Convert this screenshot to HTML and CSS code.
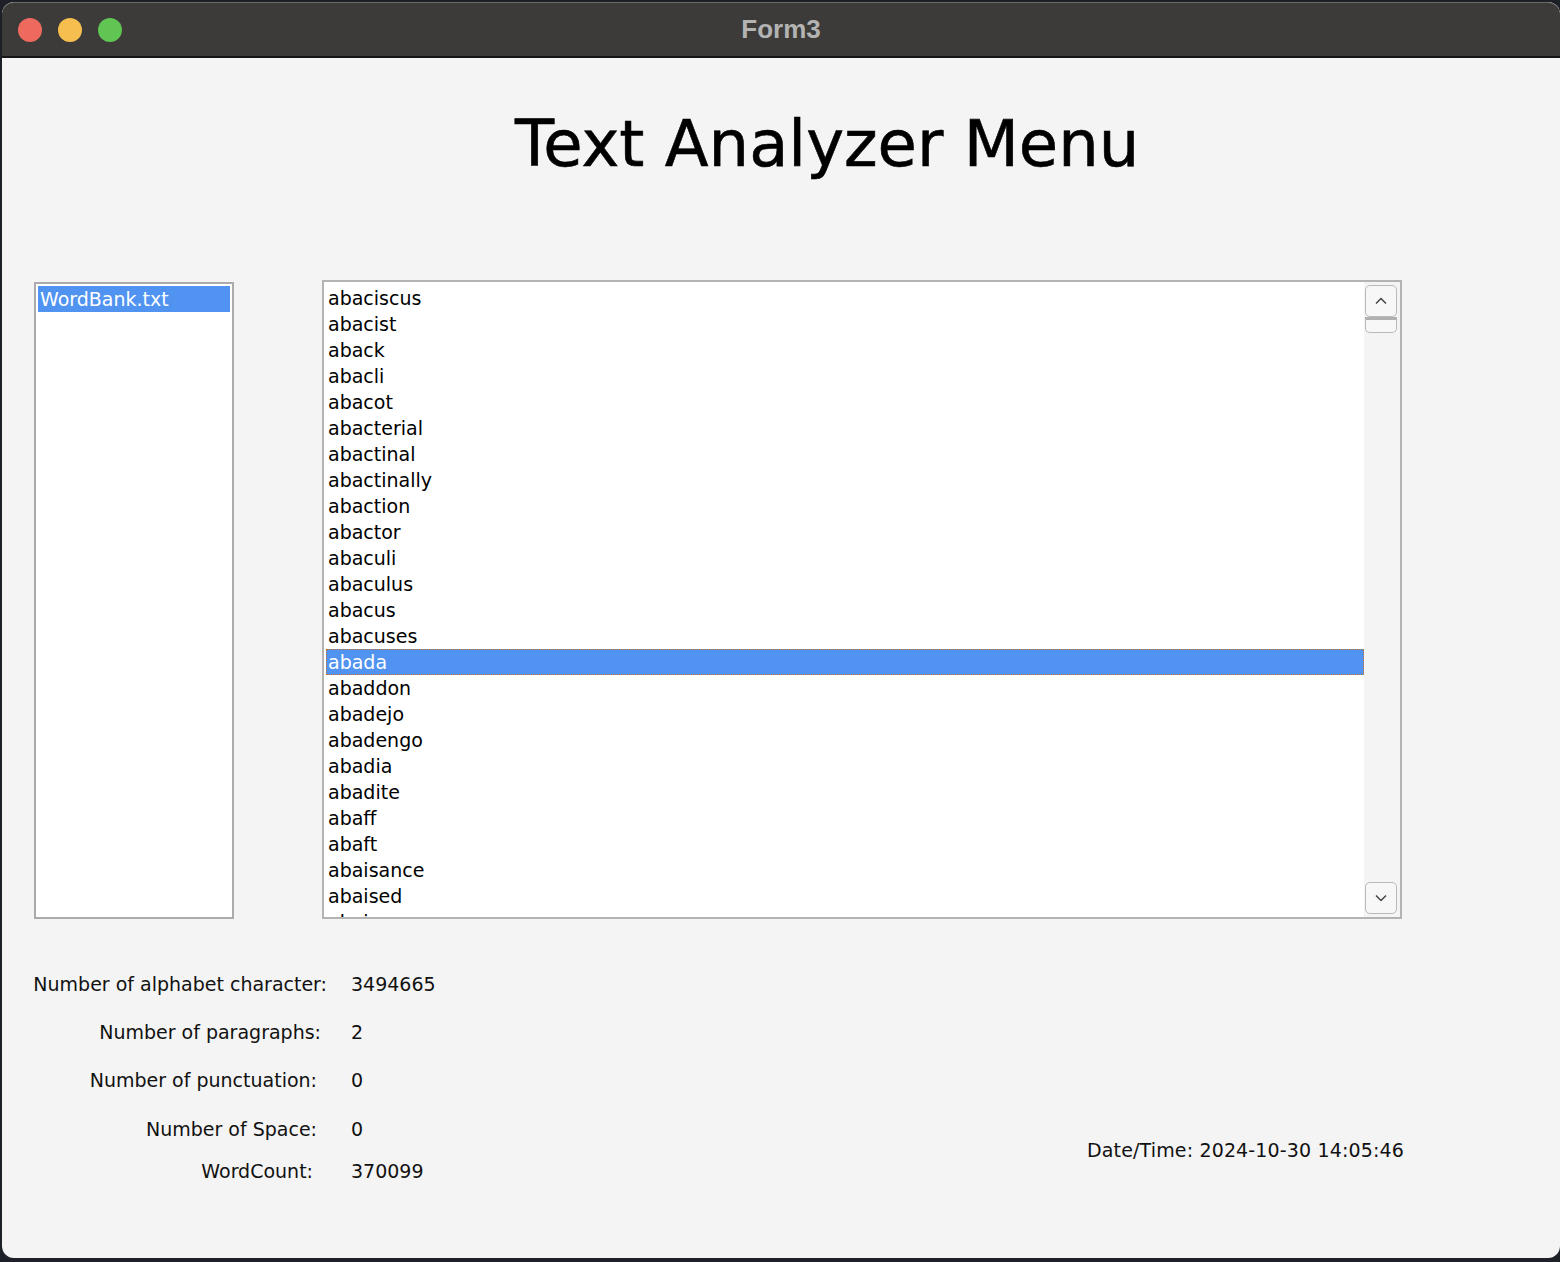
FILE: index.html
```html
<!DOCTYPE html>
<html>
<head>
<meta charset="utf-8">
<title>Form3</title>
<link rel="stylesheet" href="styles.css">
</head>
<body>
<div class="window">
  <div class="titlebar">
    <div class="lights">
      <span class="light red"></span>
      <span class="light yellow"></span>
      <span class="light green"></span>
    </div>
    <div class="wintitle">Form3</div>
  </div>
  <div class="content">
    <div class="header">
      <h1 class="title">Text Analyzer Menu</h1>
    </div>
    <div class="lists">
      <div class="filelist">
        <div class="item selected">WordBank.txt</div>
      </div>
      <div class="wordlist">
        <div class="words">
          <div class="item">abaciscus</div>
          <div class="item">abacist</div>
          <div class="item">aback</div>
          <div class="item">abacli</div>
          <div class="item">abacot</div>
          <div class="item">abacterial</div>
          <div class="item">abactinal</div>
          <div class="item">abactinally</div>
          <div class="item">abaction</div>
          <div class="item">abactor</div>
          <div class="item">abaculi</div>
          <div class="item">abaculus</div>
          <div class="item">abacus</div>
          <div class="item">abacuses</div>
          <div class="item selected focused">abada</div>
          <div class="item">abaddon</div>
          <div class="item">abadejo</div>
          <div class="item">abadengo</div>
          <div class="item">abadia</div>
          <div class="item">abadite</div>
          <div class="item">abaff</div>
          <div class="item">abaft</div>
          <div class="item">abaisance</div>
          <div class="item">abaised</div>
          <div class="item">abaiser</div>
        </div>
        <div class="scrollbar">
          <div class="sbtn">
            <svg width="14" height="8" viewBox="0 0 14 8"><path d="M2 6.5 L7 1.5 L12 6.5" fill="none" stroke="#444" stroke-width="1.5"/></svg>
          </div>
          <div class="thumb"></div>
          <div class="track"></div>
          <div class="sbtn">
            <svg width="14" height="8" viewBox="0 0 14 8"><path d="M2 1.5 L7 6.5 L12 1.5" fill="none" stroke="#444" stroke-width="1.5"/></svg>
          </div>
        </div>
      </div>
    </div>
    <div class="bottom">
      <div class="stats">
        <div class="row r1"><span class="label">Number of alphabet character:</span><span class="value">3494665</span></div>
        <div class="row r2"><span class="label">Number of paragraphs:</span><span class="value">2</span></div>
        <div class="row r3"><span class="label">Number of punctuation:</span><span class="value">0</span></div>
        <div class="row r4"><span class="label">Number of Space:</span><span class="value">0</span></div>
        <div class="row r5"><span class="label">WordCount:</span><span class="value">370099</span></div>
      </div>
      <div class="datetime">Date/Time: 2024-10-30 14:05:46</div>
    </div>
  </div>
</div>
</body>
</html>
```

FILE: styles.css
```css
* { box-sizing: border-box; }
html, body { margin: 0; padding: 0; }
body {
  background: #1d2026;
  width: 1560px;
  height: 1262px;
  overflow: hidden;
  font-family: "DejaVu Sans", sans-serif;
}
.window {
  margin: 2px 0 0 2px;
  width: 1558px;
  height: 1256px;
  background: #f4f4f4;
  border-radius: 12px;
  overflow: hidden;
}
.titlebar {
  height: 56px;
  background: #3c3b39;
  border-top: 1px solid #6a6967;
  border-bottom: 2px solid #161616;
  border-radius: 12px 12px 0 0;
  position: relative;
  display: flex;
  align-items: center;
  justify-content: center;
}
.lights {
  position: absolute;
  left: 16px;
  top: 15px;
  display: flex;
  gap: 16px;
}
.light {
  width: 24px;
  height: 24px;
  border-radius: 50%;
  display: block;
}
.red { background: #ee6a5f; }
.yellow { background: #f5be4f; }
.green { background: #61c554; }
.wintitle {
  font-family: "Liberation Sans", Arial, sans-serif;
  font-weight: bold;
  font-size: 26px;
  color: #b3b3b3;
  margin-top: -1px;
}
.header {
  height: 222px;
  padding-top: 49px;
}
.title {
  margin: 0 0 0 513px;
  font-family: "DejaVu Sans", sans-serif;
  font-weight: normal;
  font-size: 64px;
  line-height: 74px;
  color: #000;
  white-space: nowrap;
  -webkit-text-stroke: 0.6px #000;
}
.lists {
  display: flex;
  align-items: flex-end;
  height: 639px;
}
.filelist {
  margin-left: 32px;
  width: 200px;
  height: 637px;
  background: #fff;
  border: 2px solid #ababab;
  padding: 2px;
}
.item {
  height: 26px;
  line-height: 26px;
  font-size: 19px;
  color: #000;
  padding-left: 2px;
  white-space: nowrap;
}
.item.selected {
  background: #5093f0;
  color: #fff;
}
.item.focused {
  outline: 1px dotted #c8702a;
  outline-offset: -1px;
}
.wordlist {
  margin-left: 88px;
  width: 1080px;
  height: 639px;
  background: #fff;
  border: 2px solid #b3b3b3;
  display: flex;
  overflow: hidden;
}
.words {
  flex: 1;
  padding: 3px 0 0 2px;
  overflow: hidden;
}
.scrollbar {
  width: 36px;
  background: #f4f4f4;
  padding: 3px 3px 3px 1px;
  display: flex;
  flex-direction: column;
}
.sbtn {
  height: 32px;
  border: 1.5px solid #b9b9b9;
  border-radius: 5px;
  display: flex;
  align-items: center;
  justify-content: center;
  background: #f7f7f7;
}
.thumb {
  height: 16px;
  border: 1.5px solid #b9b9b9;
  border-top: 3px solid #b0b0b0;
  border-radius: 0 0 5px 5px;
  background: #f7f7f7;
}
.track { flex: 1; }
.bottom {
  display: flex;
  padding-top: 41px;
}
.stats {
  width: 1085px;
}
.row {
  display: flex;
  align-items: center;
  font-size: 19px;
  color: #111;
  white-space: nowrap;
}
.label {
  width: 325px;
  text-align: right;
}
.value {
  margin-left: 24px;
}
.r1 { height: 48px; }
.r2 { height: 48px; }
.r2 .label { padding-right: 6px; }
.r3 { height: 48px; }
.r3 .label { padding-right: 10px; }
.r4 { height: 50px; }
.r4 .label { padding-right: 10px; }
.r5 { height: 34px; }
.r5 .label { padding-right: 14px; }
.datetime {
  margin-top: 177px;
  height: 26px;
  line-height: 26px;
  font-size: 19px;
  letter-spacing: 0.15px;
  color: #111;
  white-space: nowrap;
}
```
